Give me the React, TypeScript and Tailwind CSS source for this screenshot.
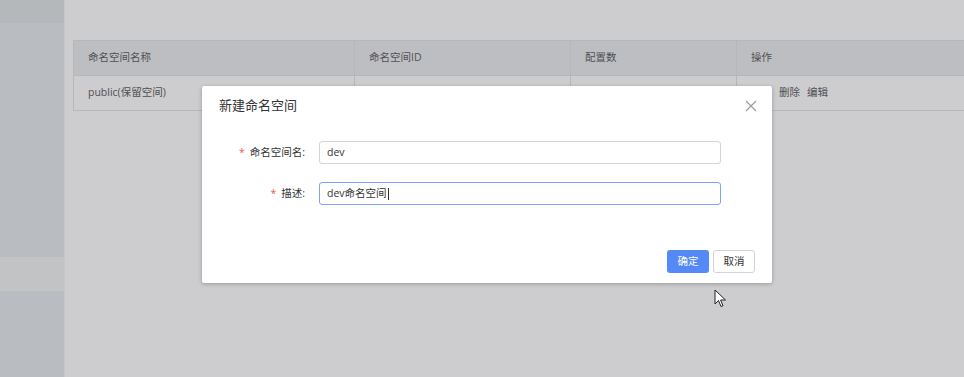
import React from "react";

const font = { fontFamily: '"Open Sans", "Noto Sans CJK SC", sans-serif' };

export default function App() {
  return (
    <div className="relative w-[964px] h-[377px] overflow-hidden bg-[#cdccce] flex" style={font}>
      {/* sidebar */}
      <div className="w-[65px] shrink-0 flex flex-col bg-[#b9bcc0] border-r border-[#c6c6c8]">
        <div className="h-[23px] bg-[#b5b8bb]" />
        <div className="h-[234px]" />
        <div className="h-[34px] bg-[#c2c3c5]" />
        <div className="flex-1" />
      </div>
      {/* main */}
      <div className="flex-1 pl-[8px] pt-[40px]">
        <div className="w-[920px] border-l border-t border-[#b6b7ba] text-[10.5px] text-[#505053]">
          <div className="flex h-[35px] bg-[#bdbec1] border-b border-[#b6b7ba]">
            <div className="w-[281px] border-r border-[#b6b7ba] pl-[14px] flex items-center">命名空间名称</div>
            <div className="w-[216px] border-r border-[#b6b7ba] pl-[14px] flex items-center">命名空间ID</div>
            <div className="w-[166px] border-r border-[#b6b7ba] pl-[14px] flex items-center">配置数</div>
            <div className="flex-1 pl-[14px] flex items-center">操作</div>
          </div>
          <div className="flex h-[35px] border-b border-[#b6b7ba]">
            <div className="w-[281px] border-r border-[#b6b7ba] pl-[14px] flex items-center">public(保留空间)</div>
            <div className="w-[216px] border-r border-[#b6b7ba]" />
            <div className="w-[166px] border-r border-[#b6b7ba]" />
            <div className="flex-1 pl-[14px] flex items-center gap-[7px]">
              <span>详情</span>
              <span>删除</span>
              <span>编辑</span>
            </div>
          </div>
        </div>
      </div>

      {/* modal */}
      <div className="absolute left-[202px] top-[86px] w-[570px] h-[197px] bg-white rounded-[2px] shadow-[0_1px_4px_rgba(0,0,0,0.25)] flex flex-col">
        <div className="flex items-center justify-between h-[38px] pl-[17px] pr-[15px] pt-[2px]">
          <span className="text-[13px] text-[#333]">新建命名空间</span>
          <svg width="12" height="12" viewBox="0 0 12 12" className="text-[#999]">
            <path d="M1 1L11 11M11 1L1 11" stroke="currentColor" strokeWidth="1.1" fill="none" />
          </svg>
        </div>
        <div className="flex flex-col gap-[18px] pt-[17px] text-[10.5px]">
          <div className="flex items-center">
            <div className="w-[117px] text-right pr-[14px] text-[#333]">
              <span className="text-[#f5574b] mr-[5px]">*</span>命名空间名:
            </div>
            <div className="w-[402px] h-[23px] border border-[#d4d4d8] rounded-[3px] flex items-center pl-[7px] text-[#333]">dev</div>
          </div>
          <div className="flex items-center">
            <div className="w-[117px] text-right pr-[14px] text-[#333]">
              <span className="text-[#f5574b] mr-[5px]">*</span>描述:
            </div>
            <div className="w-[402px] h-[23px] border border-[#7ea4ef] rounded-[3px] flex items-center pl-[7px] text-[#333]">
              dev命名空间<span className="inline-block w-px h-[12px] bg-[#333] ml-px" />
            </div>
          </div>
        </div>
        <div className="flex-1" />
        <div className="flex justify-end gap-[4px] pr-[17px] pb-[10px]">
          <div className="w-[42px] h-[23px] rounded-[3px] bg-[#5589f7] text-white text-[10.5px] flex items-center justify-center">确定</div>
          <div className="w-[42px] h-[23px] rounded-[3px] border border-[#d4d4d8] text-[#333] text-[10.5px] flex items-center justify-center">取消</div>
        </div>
      </div>

      {/* mouse cursor */}
      <svg className="absolute left-[714px] top-[289px]" width="14" height="20" viewBox="0 0 14 20">
        <path d="M1 1L1 15L4.5 11.5L7 17.5L9 16.7L6.6 11L11.5 11Z" fill="#fff" stroke="#222" strokeWidth="1" strokeLinejoin="round" />
      </svg>
    </div>
  );
}
